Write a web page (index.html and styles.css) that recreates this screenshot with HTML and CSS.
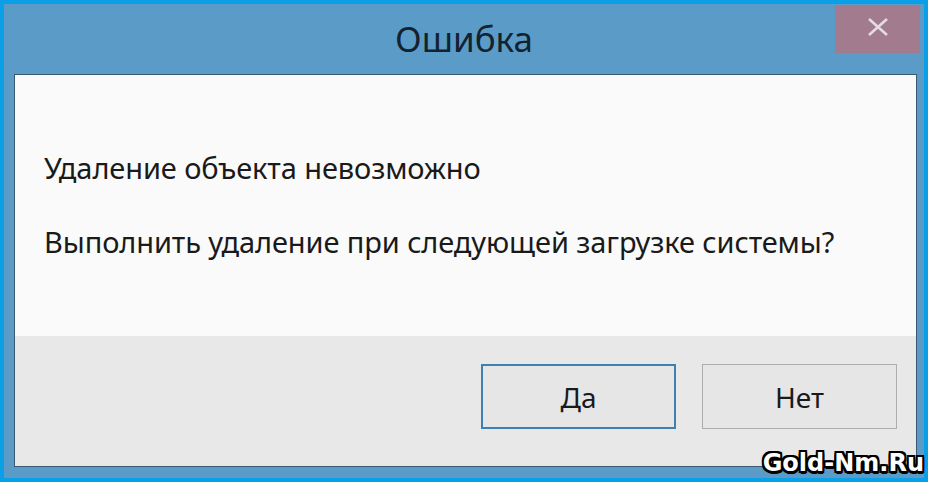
FILE: index.html
```html
<!DOCTYPE html>
<html lang="ru">
<head>
<meta charset="utf-8">
<title>Ошибка</title>
<link rel="stylesheet" href="styles.css">
</head>
<body>
<div class="window">
  <div class="titlebar">
    <div class="spacer"></div>
    <div class="title">Ошибка</div>
    <div class="close" aria-label="Закрыть">
      <svg width="24" height="18" viewBox="0 0 24 18"><path d="M3 1 L21 17 M21 1 L3 17" stroke="#e4dce0" stroke-width="2.6" fill="none"/></svg>
    </div>
  </div>
  <div class="content">
    <div class="message">
      <p class="line">Удаление объекта невозможно</p>
      <p class="line">Выполнить удаление при следующей загрузке системы?</p>
    </div>
    <div class="buttons">
      <button class="btn btn-default">Да</button>
      <button class="btn">Нет</button>
    </div>
  </div>
  <div class="watermark">Gold-Nm.Ru</div>
</div>
</body>
</html>
```
FILE: styles.css
```css
html, body {
  margin: 0;
  padding: 0;
  width: 928px;
  height: 482px;
  overflow: hidden;
}
.window {
  position: relative;
  box-sizing: border-box;
  width: 928px;
  height: 482px;
  border: 4px solid #0aa0e8;
  background: #5a9cc7;
  display: flex;
  flex-direction: column;
  padding: 0 7px 11px 10px;
  font-family: "Noto Sans", "Open Sans", sans-serif;
}
.titlebar {
  height: 70px;
  margin: 0 -7px 0 -10px;
  display: grid;
  grid-template-columns: 1fr auto 1fr;
}
.title {
  font-size: 35px;
  color: #142230;
  line-height: 1;
  padding-top: 17px;
}
.close {
  justify-self: end;
  align-self: start;
  margin: 1px 4px 0 0;
  width: 85px;
  height: 48px;
  background: #a27b8e;
  display: flex;
  align-items: center;
  justify-content: center;
  padding-bottom: 4px;
  box-sizing: border-box;
}
.content {
  flex: 1;
  border: 1px solid #3a5870;
  display: flex;
  flex-direction: column;
}
.message {
  background: #fafafb;
  height: 261px;
  box-sizing: border-box;
  padding: 72px 0 0 29px;
}
.line {
  margin: 0 0 32px 0;
  font-size: 29px;
  letter-spacing: -0.1px;
  line-height: 42px;
  color: #1a1a1a;
}
.buttons {
  flex: 1;
  background: #e8e8e9;
  display: flex;
  justify-content: flex-end;
  align-items: flex-start;
  gap: 26px;
  padding: 28px 19px 0 0;
}
.btn {
  width: 195px;
  height: 65px;
  box-sizing: border-box;
  background: #e6e6e6;
  border: 1px solid #adadad;
  font-family: "Noto Sans", "Open Sans", sans-serif;
  font-size: 28px;
  color: #1a1a1a;
  padding: 0;
}
.btn-default {
  border: 2px solid #3d80b3;
}
.watermark {
  position: absolute;
  right: 0;
  bottom: 3px;
  font-family: "DejaVu Sans", sans-serif;
  font-weight: bold;
  font-size: 24px;
  letter-spacing: 0px;
  color: #ffffff;
  line-height: 1;
  text-shadow:
    -2px -2px 0 #000, 2px -2px 0 #000, -2px 2px 0 #000, 2px 2px 0 #000,
    0 -2px 0 #000, 0 2px 0 #000, -2px 0 0 #000, 2px 0 0 #000,
    -1px -2px 0 #000, 1px 2px 0 #000, 0 3px 0 #000, 1px 3px 0 #000;
}
```
